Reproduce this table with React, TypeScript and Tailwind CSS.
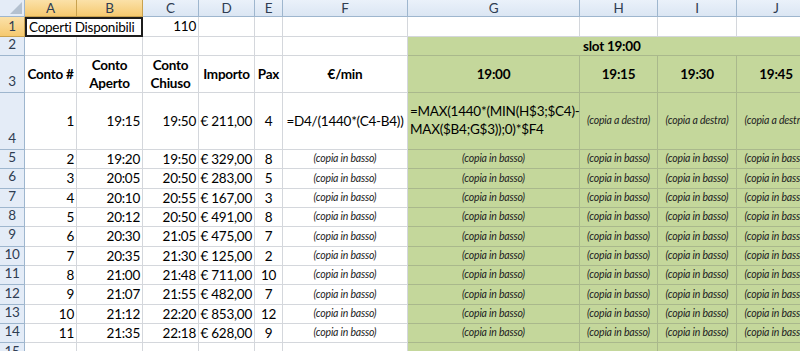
const cols = ['A', 'B', 'C', 'D', 'E', 'F', 'G', 'H', 'I', 'J']

const rows = [
  { n: 5, conto: 2, aperto: '19:20', chiuso: '19:50', importo: '€ 329,00', pax: 8 },
  { n: 6, conto: 3, aperto: '20:05', chiuso: '20:50', importo: '€ 283,00', pax: 5 },
  { n: 7, conto: 4, aperto: '20:10', chiuso: '20:55', importo: '€ 167,00', pax: 3 },
  { n: 8, conto: 5, aperto: '20:12', chiuso: '20:50', importo: '€ 491,00', pax: 8 },
  { n: 9, conto: 6, aperto: '20:30', chiuso: '21:05', importo: '€ 475,00', pax: 7 },
  { n: 10, conto: 7, aperto: '20:35', chiuso: '21:30', importo: '€ 125,00', pax: 2 },
  { n: 11, conto: 8, aperto: '21:00', chiuso: '21:48', importo: '€ 711,00', pax: 10 },
  { n: 12, conto: 9, aperto: '21:07', chiuso: '21:55', importo: '€ 482,00', pax: 7 },
  { n: 13, conto: 10, aperto: '21:12', chiuso: '22:20', importo: '€ 853,00', pax: 12 },
  { n: 14, conto: 11, aperto: '21:35', chiuso: '22:18', importo: '€ 628,00', pax: 9 },
]

const cell = 'flex items-center border-r border-b border-[#d4d7dc] px-[2px] whitespace-nowrap'
const green = 'flex items-center border-r border-b border-[#a9b88c] bg-[#c4d79b] px-[2px] whitespace-nowrap'
const rowHead = 'flex items-end justify-center border-r border-b border-[#9eb6ce] bg-[#e4ecf7] text-[#2f3d52] pb-[1px]'
const note = 'w-full text-center italic text-[10.5px] tracking-[-0.2px] text-[#222]'

export default function App() {
  return (
    <div className="w-[800px] h-[351px] overflow-hidden bg-white text-[13.5px] tracking-[-0.25px] text-black font-['Lato','Liberation_Sans',sans-serif]">
      <div className="grid grid-cols-[25px_52px_66px_56px_56px_28px_125px_172px_78px_79px_79px] grid-rows-[17px_20px_19px_37px_57px_repeat(10,19.35px)_20px]">
        {/* column headers */}
        <div className="relative border-r border-b border-[#9eb6ce] bg-[#e4ecf7]">
          <div className="absolute right-[2px] bottom-[2px] w-0 h-0 border-l-[12px] border-l-transparent border-b-[12px] border-b-[#b4c1d0]" />
        </div>
        {cols.map((c) => (
          <div
            key={c}
            className={
              c === 'A' || c === 'B'
                ? 'flex items-center justify-center border-r border-b border-[#c9a24f] bg-gradient-to-b from-[#fbe1a8] to-[#f5c96f] text-[#2f3d52]'
                : 'flex items-center justify-center border-r border-b border-[#9eb6ce] bg-gradient-to-b from-[#eaf1fa] to-[#dbe6f3] text-[#2f3d52]'
            }
          >
            {c}
          </div>
        ))}

        {/* row 1 */}
        <div className="flex items-center justify-center border-r border-b border-[#c9a24f] bg-gradient-to-b from-[#fbe1a8] to-[#f5c96f] text-[#2f3d52]">1</div>
        <div className="col-span-2 flex items-center border-2 border-[#1c1c1c] px-[2px] whitespace-nowrap">Coperti Disponibili</div>
        <div className={cell + ' justify-end'}>110</div>
        <div className={cell} />
        <div className={cell} />
        <div className={cell} />
        <div className={cell} />
        <div className={cell} />
        <div className={cell} />
        <div className={cell} />

        {/* row 2 */}
        <div className={rowHead}>2</div>
        <div className={cell} />
        <div className={cell} />
        <div className={cell} />
        <div className={cell} />
        <div className={cell} />
        <div className={cell} />
        <div className={green + ' col-span-4 pl-[175px] font-bold'}>slot 19:00</div>

        {/* row 3 */}
        <div className={rowHead}>3</div>
        <div className={cell + ' justify-center font-bold'}>Conto #</div>
        <div className={cell + ' justify-center text-center font-bold leading-[18px]'}>Conto<br />Aperto</div>
        <div className={cell + ' justify-center text-center font-bold leading-[18px]'}>Conto<br />Chiuso</div>
        <div className={cell + ' justify-center font-bold'}>Importo</div>
        <div className={cell + ' justify-center font-bold'}>Pax</div>
        <div className={cell + ' justify-center font-bold'}>€/min</div>
        <div className={green + ' justify-center font-bold'}>19:00</div>
        <div className={green + ' justify-center font-bold'}>19:15</div>
        <div className={green + ' justify-center font-bold'}>19:30</div>
        <div className={green + ' justify-center font-bold'}>19:45</div>

        {/* row 4 */}
        <div className={rowHead}>4</div>
        <div className={cell + ' justify-end'}>1</div>
        <div className={cell + ' justify-end'}>19:15</div>
        <div className={cell + ' justify-end'}>19:50</div>
        <div className={cell + ' justify-end'}>€ 211,00</div>
        <div className={cell + ' justify-center'}>4</div>
        <div className={cell + ' justify-center'}>=D4/(1440*(C4-B4))</div>
        <div className={green + ' items-start pt-[9px] leading-[18px]'}>
          =MAX(1440*(MIN(H$3;$C4)-<br />MAX($B4;G$3));0)*$F4
        </div>
        <div className={green}><span className={note}>(copia a destra)</span></div>
        <div className={green}><span className={note}>(copia a destra)</span></div>
        <div className={green}><span className={note}>(copia a destra)</span></div>

        {/* rows 5-14 */}
        {rows.map((r) => (
          <div key={r.n} className="contents">
            <div className={rowHead}>{r.n}</div>
            <div className={cell + ' justify-end'}>{r.conto}</div>
            <div className={cell + ' justify-end'}>{r.aperto}</div>
            <div className={cell + ' justify-end'}>{r.chiuso}</div>
            <div className={cell + ' justify-end'}>{r.importo}</div>
            <div className={cell + ' justify-center'}>{r.pax}</div>
            <div className={cell}><span className={note}>(copia in basso)</span></div>
            <div className={green}><span className={note}>(copia in basso)</span></div>
            <div className={green}><span className={note}>(copia in basso)</span></div>
            <div className={green}><span className={note}>(copia in basso)</span></div>
            <div className={green}><span className={note}>(copia in basso)</span></div>
          </div>
        ))}

        {/* row 15 */}
        <div className={rowHead}>15</div>
        <div className={cell} />
        <div className={cell} />
        <div className={cell} />
        <div className={cell} />
        <div className={cell} />
        <div className={cell} />
        <div className={green} />
        <div className={green} />
        <div className={green} />
        <div className={green} />
      </div>
    </div>
  )
}
